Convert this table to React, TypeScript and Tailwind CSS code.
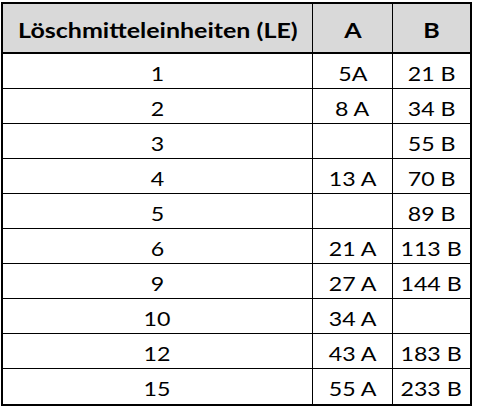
const rows: [string, string, string][] = [
  ['1', '5A', '21 B'],
  ['2', '8 A', '34 B'],
  ['3', '', '55 B'],
  ['4', '13 A', '70 B'],
  ['5', '', '89 B'],
  ['6', '21 A', '113 B'],
  ['9', '27 A', '144 B'],
  ['10', '34 A', ''],
  ['12', '43 A', '183 B'],
  ['15', '55 A', '233 B'],
];

// the source text is drawn a little wider than the font's own widths
function Txt({ children, head }: { children: string; head?: boolean }) {
  return (
    <span className={`inline-block whitespace-pre ${head ? 'scale-x-[1.25]' : 'scale-x-[1.22]'}`}>
      {children}
    </span>
  );
}

export default function App() {
  return (
    <div className="w-[479px] h-[410px] bg-white pt-[2px] pl-[1px] font-['Lato','Liberation_Sans',sans-serif] text-black">
      <div className="w-[471px] border-2 border-black">
        <div className="grid grid-cols-[310px_80px_77px] h-[50px] bg-[#d9d9d9] border-b-2 border-black text-[20px] font-bold">
          <div className="border-r border-black flex items-center justify-center pt-[4px]">
            <Txt head>Löschmitteleinheiten (LE)</Txt>
          </div>
          <div className="border-r border-black flex items-center justify-center pt-[4px]">
            <Txt head>A</Txt>
          </div>
          <div className="flex items-center justify-center pt-[4px]">
            <Txt head>B</Txt>
          </div>
        </div>
        {rows.map((r, i) => (
          <div
            key={i}
            className={`grid grid-cols-[310px_80px_77px] text-[19px] ${
              i < rows.length - 1 ? 'h-[35px] border-b border-black' : 'h-[35px]'
            }`}
          >
            <div className="border-r border-black flex items-center justify-center pt-[6px]">
              <Txt>{r[0]}</Txt>
            </div>
            <div className="border-r border-black flex items-center justify-center pt-[6px]">
              <Txt>{r[1]}</Txt>
            </div>
            <div className="flex items-center justify-center pt-[6px]">
              <Txt>{r[2]}</Txt>
            </div>
          </div>
        ))}
      </div>
    </div>
  );
}
